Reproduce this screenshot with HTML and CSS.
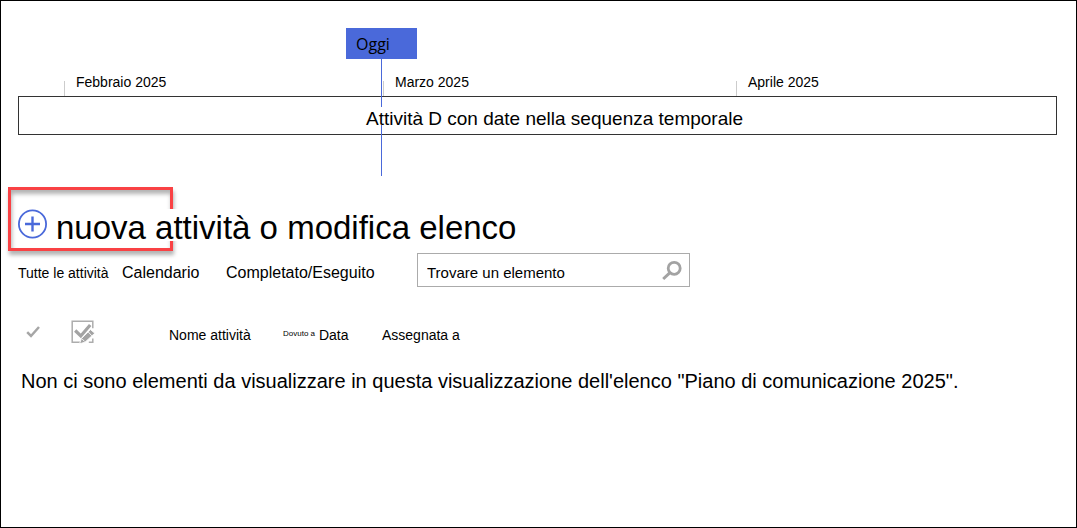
FILE: index.html
```html
<!DOCTYPE html>
<html lang="it">
<head>
<meta charset="utf-8">
<meta name="viewport" content="width=device-width, initial-scale=1">
<title>Piano di comunicazione 2025</title>
<link rel="stylesheet" href="styles.css">
</head>
<body class="page">
<section class="timeline" aria-label="Sequenza temporale">
  <div class="today"><span class="today-flag">Oggi</span></div>
  <div class="months">
    <div class="month">Febbraio 2025</div>
    <div class="month">Marzo 2025</div>
    <div class="month">Aprile 2025</div>
  </div>
  <div class="track"><span class="track-text">Attività D con date nella sequenza temporale</span></div>
</section>
<main class="list">
  <div class="heading">
    <div class="highlight"></div>
    <button class="add" type="button" aria-label="nuova attività">
      <svg width="30" height="30" viewBox="0 0 30 30" fill="none" stroke="#4a69da">
        <circle cx="14.5" cy="15" r="13.6" stroke-width="1.8"/>
        <path d="M14.5 7.5v15M7 15h15" stroke-width="2.4"/>
      </svg>
    </button>
    <h1 class="title">nuova attività o modifica elenco</h1>
  </div>
  <div class="toolbar">
    <nav class="views">
      <a class="view view-current" href="#">Tutte le attività</a>
      <a class="view" href="#">Calendario</a>
      <a class="view" href="#">Completato/Eseguito</a>
    </nav>
    <form class="search">
      <input class="search-input" type="text" value="Trovare un elemento" aria-label="Trovare un elemento">
      <button class="search-button" type="button" aria-label="Cerca">
        <svg width="22" height="22" viewBox="0 0 22 22" fill="none" stroke="#a3a3a3">
          <circle cx="13.2" cy="9.3" r="6" stroke-width="2.8"/>
          <path d="M9 13.6 2.2 20" stroke-width="3"/>
        </svg>
      </button>
    </form>
  </div>
  <table class="tasks">
    <thead>
      <tr>
        <th class="col-check">
          <svg width="14" height="14" viewBox="0 0 14 14" fill="none" stroke="#a6a6a6" stroke-width="2.5"><path d="M1.2 7.2 5 11 13 2"/></svg>
        </th>
        <th class="col-edit">
          <svg width="24" height="24" viewBox="0 0 24 24" fill="none">
            <path d="M9 22.2H1.2V1.2h20.6v7M21.8 18.5v3.7h-4" stroke="#adadad" stroke-width="1.5"/>
            <path d="M4.2 10.5 9.8 16 19.2 5" stroke="#a3a3a3" stroke-width="3.2"/>
            <path d="M8.5 23.8 10.4 18.6 19.5 9.6 23.8 13.2 14 22.2Z" fill="#a3a3a3" stroke="#fff" stroke-width="0.9"/>
            <path d="M17.3 12 20.8 15.8M11 18.8 13.6 21.5" stroke="#fff" stroke-width="0.9"/>
          </svg>
        </th>
        <th class="col-name">Nome attività</th>
        <th class="col-date"><span class="due">Dovuto a</span> Data</th>
        <th>Assegnata a</th>
      </tr>
    </thead>
  </table>
  <p class="empty">Non ci sono elementi da visualizzare in questa visualizzazione dell'elenco "Piano di comunicazione 2025".</p>
</main>
</body>
</html>
```
FILE: styles.css
```css
* { box-sizing: border-box; }

.page {
  margin: 0;
  min-height: 100vh;
  padding: 27px 19px 20px 17px;
  border: 1px solid #000;
  background: #fff;
  color: #000;
  font-family: "Liberation Sans", Arial, sans-serif;
  font-size: 14px;
}

.timeline {
  position: relative;
  padding-top: 53px;
  padding-bottom: 41px;
}

.today {
  position: absolute;
  top: 0;
  left: 328px;
  width: 71px;
}

.today::after {
  content: "";
  display: block;
  width: 1px;
  height: 117px;
  margin-left: 35px;
  background: #4a69da;
}

.today-flag {
  display: block;
  height: 31px;
  padding-left: 10px;
  background: #4a69da;
  font-family: "Open Sans", sans-serif;
  font-size: 16px;
  line-height: 32px;
}

.months {
  display: grid;
  grid-template-columns: 319fr 353fr 321fr;
  margin-left: 46px;
}

.month {
  height: 15px;
  padding-left: 11px;
  border-left: 1px solid #ccc;
  line-height: 2px;
}

.track {
  padding: 10px 0 9px 34px;
  border: 1px solid #333;
  text-align: center;
  font-size: 19px;
  line-height: 18px;
}

.track-text {
  display: block;
  position: relative;
  width: fit-content;
  height: 18px;
  margin: 0 auto;
  background: #fff;
  line-height: 24px;
}

.heading {
  position: relative;
  display: flex;
  align-items: center;
  gap: 8px;
  height: 65px;
  margin-top: 11px;
}

.highlight {
  position: absolute;
  top: 0;
  left: -10px;
  width: 165px;
  height: 64px;
  border: 3px solid #f94144;
  box-shadow: 1px 4px 4px rgba(0, 0, 0, 0.3), inset 1px 4px 4px rgba(0, 0, 0, 0.3);
}

.add {
  position: relative;
  width: 30px;
  height: 30px;
  margin-top: 9px;
  padding: 0;
  border: 0;
  background: none;
}

.add svg { display: block; }

.title {
  position: relative;
  height: 32px;
  margin: 10px 0 0;
  background: #fff;
  font-size: 33px;
  font-weight: 400;
  line-height: 38px;
}

.toolbar {
  display: flex;
  align-items: center;
  margin-top: 1px;
}

.views {
  display: grid;
  grid-template-columns: 104px 104px 191px;
  align-items: center;
  padding-top: 6px;
}

.view {
  color: inherit;
  font-size: 16px;
  text-decoration: none;
}

.view-current { font-size: 14px; }

.search {
  display: flex;
  align-items: center;
  width: 273px;
  height: 34px;
  padding-right: 6px;
  border: 1px solid #ababab;
}

.search-input {
  flex: 1;
  min-width: 0;
  padding: 5px 0 0 9px;
  border: 0;
  outline: 0;
  background: none;
  color: inherit;
  font: inherit;
  font-size: 15px;
}

.search-button {
  padding: 0;
  border: 0;
  background: none;
}

.search-button svg { display: block; }

.tasks {
  width: 100%;
  margin-top: 30px;
  border-collapse: collapse;
  table-layout: fixed;
}

.tasks th {
  height: 30px;
  padding: 6px 0 0;
  font-size: 14px;
  font-weight: 400;
  text-align: left;
}

.tasks svg { display: block; }

.tasks .col-check { width: 53px; padding: 0 0 0 8px; }
.tasks .col-edit { width: 98px; padding: 0; }
.col-name { width: 114px; }
.col-date { width: 99px; }

.due {
  font-size: 8px;
  vertical-align: 4px;
}

.empty {
  margin: 22px 0 0 3px;
  font-size: 20px;
  line-height: 24px;
}
```
